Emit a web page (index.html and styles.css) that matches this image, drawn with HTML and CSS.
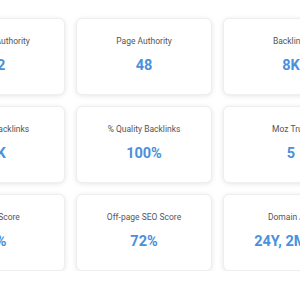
FILE: index.html
```html
<!DOCTYPE html>
<html lang="en">
<head>
  <meta charset="UTF-8" />
  <title>SEO Metrics</title>
  <link rel="stylesheet" href="styles.css">
</head>
<body>
  <div class="grid">
    <div class="card"><span class="label">Domain Authority</span><span class="value">32</span></div>
    <div class="card"><span class="label">Page Authority</span><span class="value">48</span></div>
    <div class="card"><span class="label">Backlinks</span><span class="value">8K</span></div>

    <div class="card"><span class="label">Quality Backlinks</span><span class="value">8K</span></div>
    <div class="card"><span class="label">% Quality Backlinks</span><span class="value">100%</span></div>
    <div class="card"><span class="label">Moz Trust</span><span class="value">5</span></div>

    <div class="card"><span class="label">Spam Score</span><span class="value">1%</span></div>
    <div class="card"><span class="label">Off-page SEO Score</span><span class="value">72%</span></div>
    <div class="card"><span class="label">Domain Age</span><span class="value">24Y, 2M 3D</span></div>
  </div>
</body>
</html>
```

FILE: styles.css
```css
body {
  margin: 0;
  font-family: Roboto, 'Noto Sans', sans-serif;
  background: #fff;
  color: #555;
  overflow: hidden;
}

.grid {
  display: grid;
  grid-template-columns: repeat(3, 136px);
  grid-auto-rows: 77px;
  gap: 11px;
  margin: 18px 0 0 -71px;
  width: 430px;
}

.card {
  background: #fff;
  border-radius: 6px;
  border: 1px solid #eee;
  box-shadow: 0 1px 5px rgba(0,0,0,0.1);
  padding-top: 17px;
  text-align: center;
  box-sizing: border-box;
}

.card span { display: block; white-space: nowrap; }

.label {
  font-size: 8.5px;
  line-height: 10px;
  color: #555;
}

.value {
  margin-top: 11px;
  font-size: 14.5px;
  line-height: 17px;
  font-weight: 700;
  color: #4a90dc;
}
```
